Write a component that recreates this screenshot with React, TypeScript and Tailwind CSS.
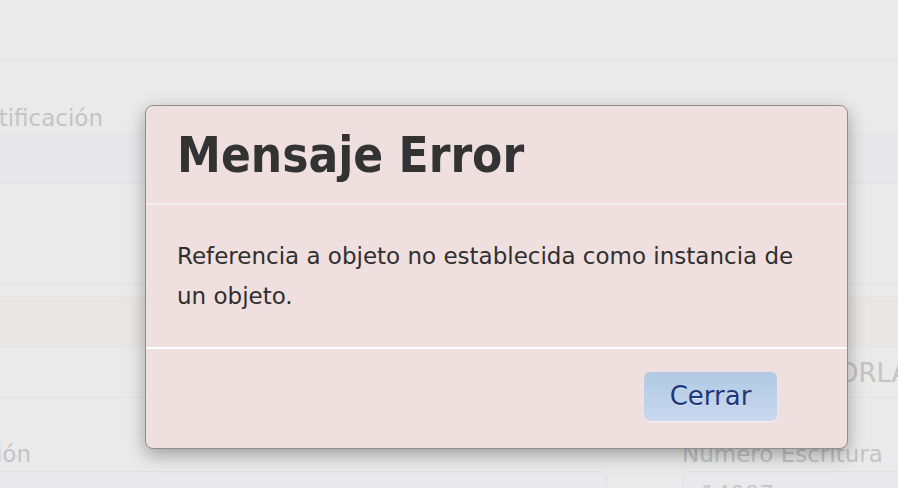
import React from "react";

function ErrorDialog() {
  return (
    <div className="absolute left-[145px] top-[105px] w-[703px] rounded-[8px] border-[1.5px] border-[#8e8e8e] bg-[#f0dfdf] shadow-[0_6px_18px_rgba(0,0,0,0.32)]">
      <div className="border-b-2 border-[#f6eeee] px-[31px] pt-[25px] pb-[22px]">
        <h2 className="text-[49px] font-bold leading-[50px] text-[#333333] [font-family:'DejaVu_Sans_Condensed','DejaVu_Sans',sans-serif] [font-stretch:condensed]">
          Mensaje Error
        </h2>
      </div>
      <div className="border-b-2 border-white pl-[31px] pr-[31px] pt-[31px] pb-[31px]">
        <p className="text-[23px] leading-[40px] text-[#2f2f2f]">
          Referencia a objeto no establecida como instancia de un objeto.
        </p>
      </div>
      <div className="flex justify-end pr-[70px] pt-[23px] pb-[27px]">
        <button className="h-[49px] w-[133px] rounded-[6px] bg-gradient-to-b from-[#b1c9e2] to-[#c8d8f0] text-[26px] text-[#203677] shadow-[0_1px_2px_rgba(255,255,255,0.6)] [text-shadow:0_1px_0_rgba(255,255,255,0.5)]">
          Cerrar
        </button>
      </div>
    </div>
  );
}

export default function App() {
  return (
    <div className="relative h-[488px] w-[898px] overflow-hidden bg-[#eaeaea] text-[#c4c4c4] [font-family:'DejaVu_Sans',sans-serif]">
      <div className="h-[60px] border-b border-[#e3e3e5]" />
      <div className="flex h-[74px] items-end pb-[2px]">
        <div className="flex w-[103px] justify-end overflow-hidden whitespace-nowrap text-[23px] leading-[28px]">
          Identificación
        </div>
      </div>
      <div className="h-[50px] border-y border-[#e1e1e6] bg-[#e8e8ea]" />
      <div className="h-[101px] border-b border-[#e2e2e5]" />
      <div className="h-[11px]" />
      <div className="h-[52px] border-y border-[#e2e2e4] bg-[#e8e7e5]" />
      <div className="flex h-[50px] items-center overflow-hidden border-b border-[#e2e2e4] whitespace-nowrap">
        <span className="ml-[838px] text-[26px] leading-[30px]">ORLA</span>
      </div>
      <div className="flex h-[73px] items-center pt-[38px] text-[23px] leading-[28px] whitespace-nowrap">
        <div className="flex w-[31px] justify-end overflow-hidden">ción</div>
        <div className="ml-[651px]">Numero Escritura</div>
      </div>
      <div className="flex">
        <div className="h-[40px] w-[607px] rounded-tr-[6px] border-t border-r border-[#e0e0e4] bg-[#e9e9eb]" />
        <div className="ml-[75px] h-[40px] flex-1 rounded-tl-[6px] border-t border-l border-[#e0e0e4] bg-[#e9e9eb] pl-[18px] pt-[8px] text-[23px] leading-[28px] text-[#c8c8c8]">
          14097
        </div>
      </div>
      <ErrorDialog />
    </div>
  );
}
